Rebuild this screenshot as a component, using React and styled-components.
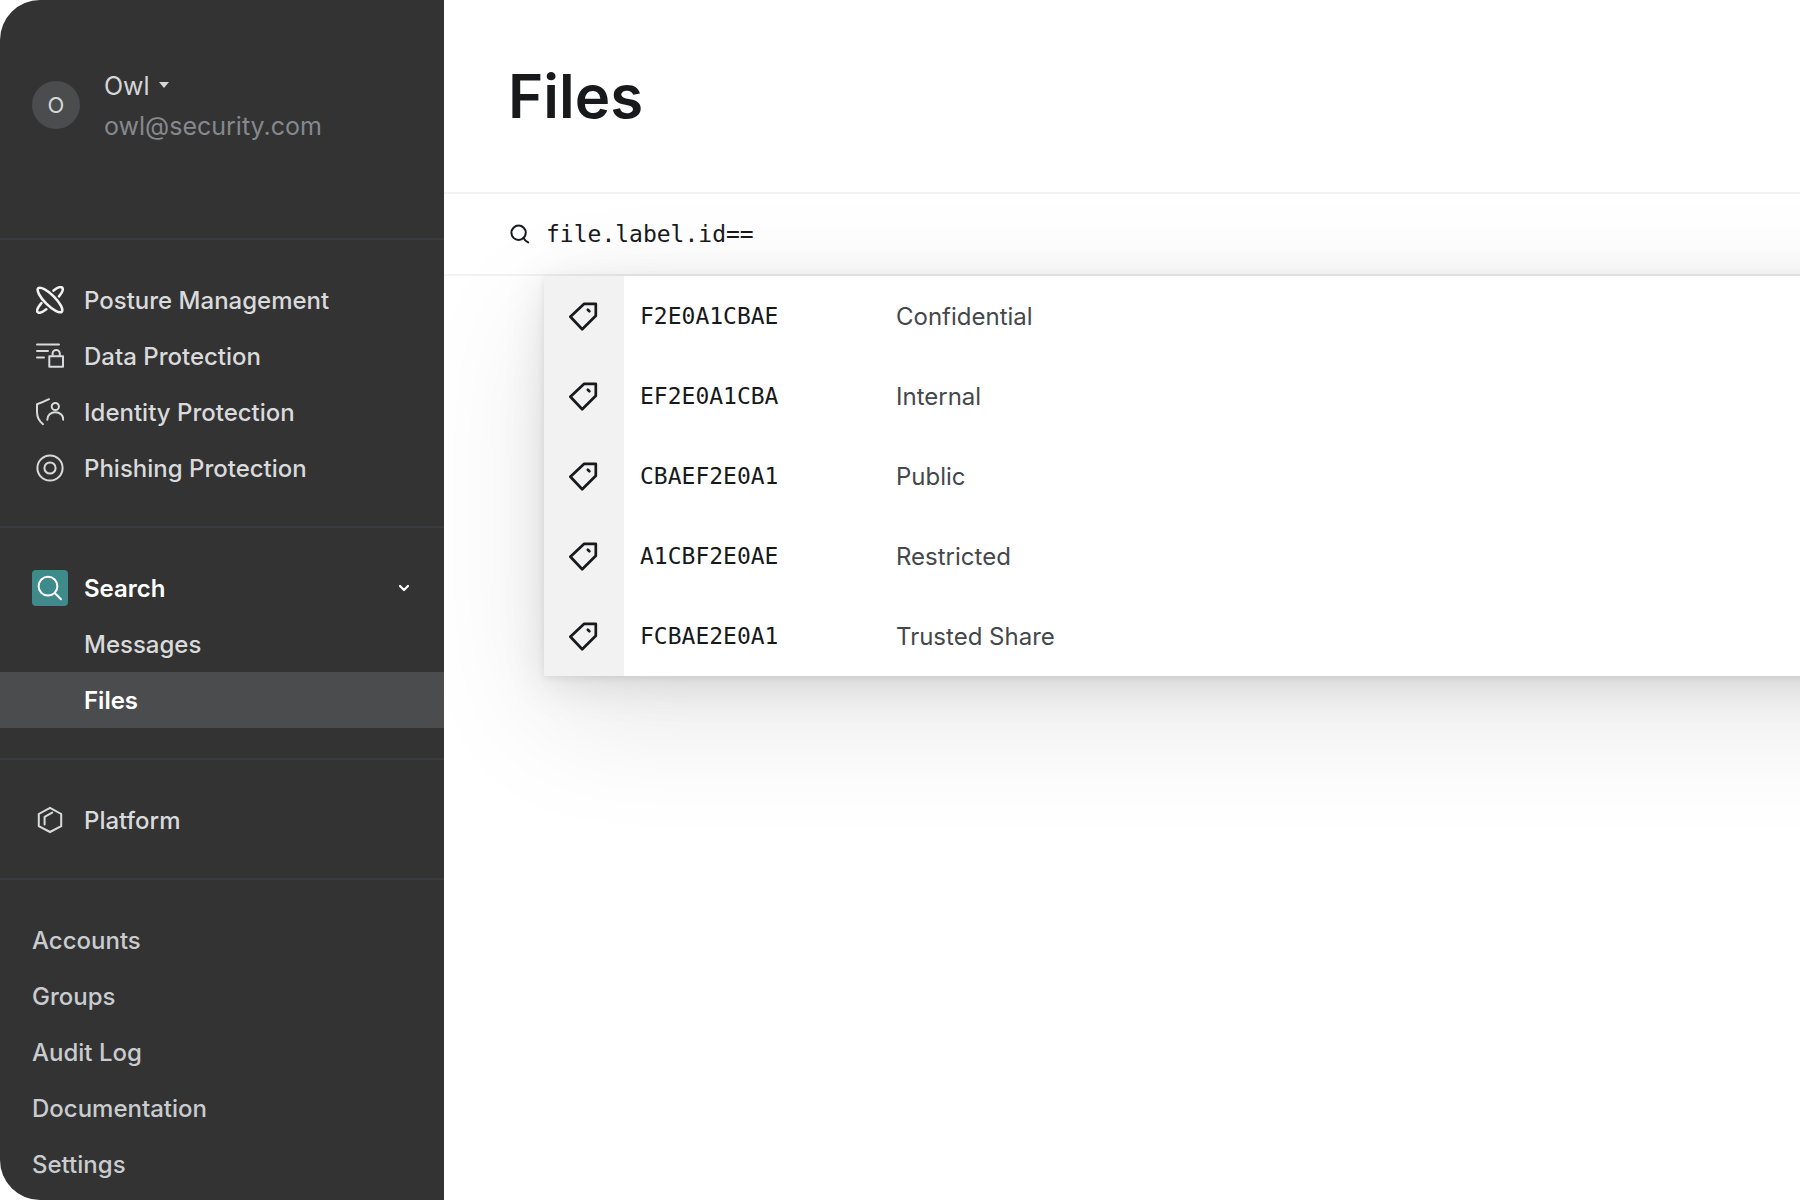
import React, { useState } from 'react';
import styled, { createGlobalStyle } from 'styled-components';

const GlobalStyle = createGlobalStyle`
	* {
		box-sizing: border-box;
	}

	body {
		margin: 0;
		background-color: #fff;
		font-family: Inter, 'Liberation Sans', sans-serif;
		-webkit-font-smoothing: antialiased;
	}
`;

const Page = styled.div`
	display: flex;
	min-height: 100vh;
`;

const Sidebar = styled.aside`
	flex: 0 0 444px;
	background-color: #333333;
	border-radius: 40px 0 0 40px;
	overflow: hidden;
`;

const Profile = styled.div`
	display: flex;
	align-items: center;
	gap: 24px;
	padding: 64px 32px 92px;
	border-bottom: solid 2px #383c40;
`;

const Avatar = styled.div`
	width: 48px;
	height: 48px;
	border-radius: 50%;
	background-color: #4b4c4e;
	color: #d4d6d8;
	font-size: 22px;
	line-height: 48px;
	text-align: center;
`;

const Account = styled.div`
	padding-top: 2px;
`;

const AccountButton = styled.button`
	display: flex;
	align-items: center;
	gap: 8px;
	padding: 0;
	border: none;
	background: none;
	color: #d4d6d8;
	font-family: inherit;
	font-size: 25px;
	line-height: 40px;
	cursor: pointer;
`;

const Email = styled.div`
	color: #85898d;
	font-size: 25px;
	line-height: 40px;
`;

const Section = styled.ul`
	margin: 0;
	padding: 32px 0 30px;
	list-style: none;
	border-bottom: solid 2px #383c40;

	&:last-child {
		padding-bottom: 0;
		border-bottom: none;
	}
`;

const NavLink = styled.a`
	display: flex;
	align-items: center;
	gap: 16px;
	height: 56px;
	padding: 0 32px 0 ${({ $nested }) => ($nested ? '84px' : '32px')};
	background-color: ${({ $active }) => ($active ? '#4b4c4e' : 'transparent')};
	color: ${({ $active, $muted }) => ($active ? '#fff' : $muted ? '#c9cccf' : '#d9dadb')};
	font-size: 24px;
	font-weight: ${({ $active }) => ($active ? 600 : 500)};
	text-decoration: none;
`;

const NavToggle = styled.button`
	display: flex;
	align-items: center;
	gap: 16px;
	width: 100%;
	height: 56px;
	padding: 0 32px;
	border: none;
	background: none;
	color: #fff;
	font-family: inherit;
	font-size: 24px;
	font-weight: 600;
	text-align: left;
	cursor: pointer;
`;

const NavLabel = styled.span`
	flex: 1;
`;

const IconTile = styled.span`
	display: flex;
	align-items: center;
	justify-content: center;
	width: 36px;
	height: 36px;
	border-radius: 4px;
	background-color: ${({ $filled }) => ($filled ? '#3f8b8b' : 'transparent')};
`;

const Main = styled.main`
	flex: 1;
	min-width: 0;
	overflow: hidden;
`;

const Header = styled.header`
	padding: 64px;
	border-bottom: solid 2px #f3f3f3;
`;

const Title = styled.h1`
	margin: 0;
	color: #17191b;
	font-size: 60px;
	font-weight: 600;
	line-height: 64px;
`;

const SearchBar = styled.label`
	display: flex;
	align-items: center;
	gap: 16px;
	height: 82px;
	padding-left: 66px;
	border-bottom: solid 2px #f3f3f3;
	color: #17191b;
`;

const SearchInput = styled.input`
	flex: 1;
	min-width: 0;
	padding: 0;
	border: none;
	outline: none;
	background: none;
	color: #17191b;
	font-family: 'DejaVu Sans Mono', 'Liberation Mono', monospace;
	font-size: 23px;
`;

/* runs past the right edge, so its shadow does not fade out before the window ends */
const Suggestions = styled.ul`
	margin: 0 -160px 0 100px;
	padding: 0;
	list-style: none;
	background-color: #fff;
	box-shadow: 0 40px 120px rgba(0, 0, 0, 0.1), 0 8px 40px rgba(0, 0, 0, 0.1), 0 2px 8px rgba(0, 0, 0, 0.08);
`;

const Suggestion = styled.button`
	display: grid;
	grid-template-columns: 80px 240px 1fr;
	column-gap: 16px;
	align-items: center;
	width: 100%;
	height: 80px;
	padding: 0;
	border: none;
	background: none;
	text-align: left;
	cursor: pointer;
`;

const TagCell = styled.span`
	display: flex;
	align-items: center;
	justify-content: center;
	height: 100%;
	background-color: #f2f2f2;
	color: #17191b;
`;

const Code = styled.span`
	color: #17191b;
	font-family: 'DejaVu Sans Mono', 'Liberation Mono', monospace;
	font-size: 23px;
`;

const LabelName = styled.span`
	color: #44484b;
	font-family: Inter, 'Liberation Sans', sans-serif;
	font-size: 24px;
`;

const Svg = ({ size, width = 2, color = 'currentColor', children }) => (
	<svg
		width={size}
		height={size}
		viewBox={`0 0 ${size} ${size}`}
		fill="none"
		stroke={color}
		strokeWidth={width}
		strokeLinecap="round"
		strokeLinejoin="round"
		aria-hidden="true"
	>
		{children}
	</svg>
);

const PostureIcon = () => (
	<Svg size={28} width={2.6} color="#f2f2f2">
		<ellipse cx="14" cy="14" rx="16.6" ry="5.2" transform="rotate(45 14 14)" />
		<path d="M17.6 4.6C21.3 1.6 24.8.4 26.2 1.7c1.3 1.4 0 4.8-3.2 8.6" />
		<path d="M5.4 17.2C2 21.2.4 24.8 1.7 26.2c1.3 1.3 4.8 0 8.6-2.9" />
	</Svg>
);

const DataIcon = () => (
	<Svg size={28} width={2}>
		<path d="M1 2.5h22M1 9h11M1 15.5h7" />
		<rect x="13.3" y="14.3" width="13.7" height="10.4" />
		<path d="M16.6 14v-2.4a3.6 3.6 0 0 1 7.2 0V14" />
	</Svg>
);

const IdentityIcon = () => (
	<Svg size={28} width={2}>
		<path d="M13 1.2C9.4 3 5.4 4.8 1 6.2v7.6c0 5 2 9.4 6 12.4" />
		<circle cx="19.3" cy="8.5" r="3.6" />
		<path d="M11.3 21.8c0-4.7 3.5-7.6 8-7.6s8 2.9 8 7.6" />
	</Svg>
);

const PhishingIcon = () => (
	<Svg size={28} width={2}>
		<circle cx="14" cy="14" r="12.6" />
		<circle cx="14" cy="14" r="5.6" />
	</Svg>
);

const PlatformIcon = () => (
	<Svg size={28} width={2}>
		<path d="M14 1.8L25.2 8v12.2L14 26 2.8 20.2V8z" strokeLinejoin="miter" />
		<path d="M8.6 18.4V10.8L16.2 6.6" />
	</Svg>
);

const GlassIcon = () => (
	<Svg size={28}>
		<circle cx="12" cy="12.2" r="9.4" />
		<path d="M19 19.2l6 6" />
	</Svg>
);

const SmallGlassIcon = () => (
	<Svg size={20}>
		<circle cx="8.6" cy="8.8" r="7.2" />
		<path d="M13.4 13.6c.6 1.6 1.6 3.2 4.8 4.8" />
	</Svg>
);

const TagIcon = () => (
	<Svg size={30} width={2.7}>
		<path d="M15.2 2.8h11.6v12L13.2 28.2 1.4 15.8z" />
		<path d="M18.8 8.8l1.6 1.4" />
	</Svg>
);

const ChevronIcon = () => (
	<Svg size={16} width={2.2}>
		<path d="M4 6l4 4 4-4" />
	</Svg>
);

const CaretIcon = () => (
	<svg width="12" height="8" viewBox="0 0 12 8" fill="currentColor" aria-hidden="true">
		<path d="M1 0h10L6 6z" />
	</svg>
);

const products = [
	{ name: 'Posture Management', Icon: PostureIcon },
	{ name: 'Data Protection', Icon: DataIcon },
	{ name: 'Identity Protection', Icon: IdentityIcon },
	{ name: 'Phishing Protection', Icon: PhishingIcon },
];

const searchPages = ['Messages', 'Files'];

const adminPages = ['Accounts', 'Groups', 'Audit Log', 'Documentation', 'Settings'];

const labels = [
	{ id: 'F2E0A1CBAE', name: 'Confidential' },
	{ id: 'EF2E0A1CBA', name: 'Internal' },
	{ id: 'CBAEF2E0A1', name: 'Public' },
	{ id: 'A1CBF2E0AE', name: 'Restricted' },
	{ id: 'FCBAE2E0A1', name: 'Trusted Share' },
];

const NavItem = ({ name, Icon, ...rest }) => (
	<li>
		<NavLink href="#" {...rest}>
			{Icon && <IconTile><Icon /></IconTile>}
			{name}
		</NavLink>
	</li>
);

const App = () => {
	const [query, setQuery] = useState('file.label.id==');
	const [searchOpen, setSearchOpen] = useState(true);

	return (
		<Page>
			<GlobalStyle />
			<Sidebar>
				<Profile>
					<Avatar>O</Avatar>
					<Account>
						<AccountButton type="button">
							Owl
							<CaretIcon />
						</AccountButton>
						<Email>owl@security.com</Email>
					</Account>
				</Profile>
				<nav>
					<Section>
						{products.map((item) => <NavItem key={item.name} {...item} />)}
					</Section>
					<Section>
						<li>
							<NavToggle type="button" aria-expanded={searchOpen} onClick={() => setSearchOpen(!searchOpen)}>
								<IconTile $filled><GlassIcon /></IconTile>
								<NavLabel>Search</NavLabel>
								<ChevronIcon />
							</NavToggle>
						</li>
						{searchOpen && searchPages.map((name) => (
							<NavItem key={name} name={name} $nested $active={name === 'Files'} />
						))}
					</Section>
					<Section>
						<NavItem name="Platform" Icon={PlatformIcon} />
					</Section>
					<Section>
						{adminPages.map((name) => <NavItem key={name} name={name} $muted />)}
					</Section>
				</nav>
			</Sidebar>
			<Main>
				<Header>
					<Title>Files</Title>
				</Header>
				<SearchBar>
					<SmallGlassIcon />
					<SearchInput
						type="text"
						aria-label="Search files"
						spellCheck={false}
						value={query}
						onChange={(e) => setQuery(e.target.value)}
					/>
				</SearchBar>
				<Suggestions>
					{labels.map((label) => (
						<li key={label.id}>
							<Suggestion type="button" onClick={() => setQuery(`file.label.id==${label.id}`)}>
								<TagCell><TagIcon /></TagCell>
								<Code>{label.id}</Code>
								<LabelName>{label.name}</LabelName>
							</Suggestion>
						</li>
					))}
				</Suggestions>
			</Main>
		</Page>
	);
};

export default App;
